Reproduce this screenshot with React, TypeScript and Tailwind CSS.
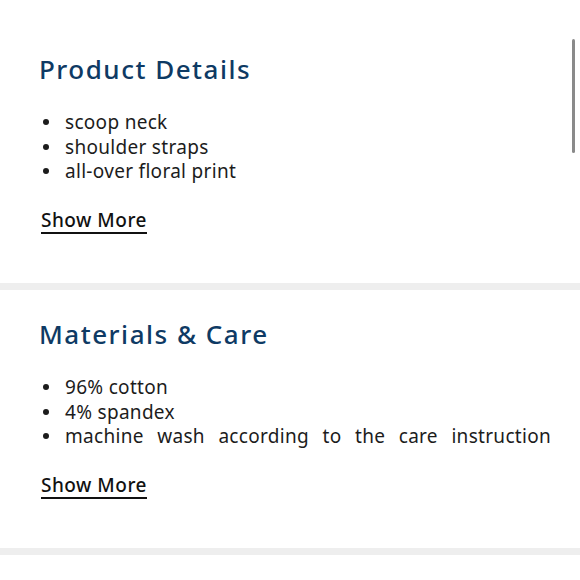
import React from 'react';

const sections = [
    {
        title: 'Product Details',
        items: ['scoop neck', 'shoulder straps', 'all-over floral print'],
    },
    {
        title: 'Materials & Care',
        items: ['96% cotton', '4% spandex', 'machine wash according to the care instruction'],
    },
];

function DetailSection({ title, items }: { title: string; items: string[] }) {
    return (
        <section className="bg-white pl-[39px] pr-[29px] pt-[28px] pb-[50px]">
            <h2 className="text-[26px] leading-[32px] font-medium text-[#0e3a64] tracking-[1.5px]">{title}</h2>
            {/* bullets */}
            <ul className="mt-[25px] text-[19px] leading-[24.5px] text-[#1c1c1c] tracking-[0.3px]">
                {items.map((item, i) => (
                    <li key={i} className="flex items-center">
                        <span className="w-[26px] shrink-0 pl-[4px]">
                            <span className="block w-[6px] h-[6px] rounded-full bg-[#1c1c1c]" />
                        </span>
                        {item.length > 30 ? (
                            <span className="flex-1 text-justify [text-align-last:justify]">{item}</span>
                        ) : (
                            <span className="flex-1">{item}</span>
                        )}
                    </li>
                ))}
            </ul>
            <a className="mt-[24.5px] ml-[2px] inline-block text-[19px] leading-[24px] font-medium text-[#111] underline underline-offset-[5px] decoration-[2px] tracking-[0.5px]">
                Show More
            </a>
        </section>
    );
}

export default function App() {
    return (
        <div className="relative w-[580px] h-[580px] overflow-hidden bg-white font-['Noto_Sans',sans-serif]">
            <div className="h-[25px]" />
            <DetailSection {...sections[0]} />
            <div className="h-[7px] bg-[#eeeeee]" />
            <DetailSection {...sections[1]} />
            <div className="h-[7px] bg-[#eeeeee]" />
            <div className="h-[30px]" />
            {/* scrollbar thumb */}
            <div className="absolute right-[5px] top-[39px] w-[3px] h-[114px] rounded-full bg-[#8a8a8a]" />
        </div>
    );
}
